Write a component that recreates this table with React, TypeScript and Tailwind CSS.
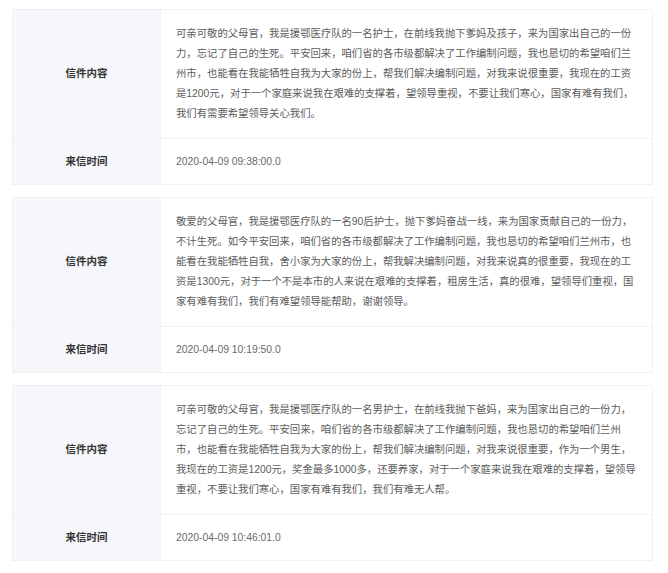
const letters = [
  {
    lines: [
      "可亲可敬的父母官，我是援鄂医疗队的一名护士，在前线我抛下爹妈及孩子，来为国家出自己的一份",
      "力，忘记了自己的生死。平安回来，咱们省的各市级都解决了工作编制问题，我也恳切的希望咱们兰",
      "州市，也能看在我能牺牲自我为大家的份上，帮我们解决编制问题，对我来说很重要，我现在的工资",
      "是1200元，对于一个家庭来说我在艰难的支撑着，望领导重视，不要让我们寒心，国家有难有我们，",
      "我们有需要希望领导关心我们。",
    ],
    time: "2020-04-09 09:38:00.0",
  },
  {
    lines: [
      "敬爱的父母官，我是援鄂医疗队的一名90后护士，抛下爹妈奋战一线，来为国家贡献自己的一份力，",
      "不计生死。如今平安回来，咱们省的各市级都解决了工作编制问题，我也恳切的希望咱们兰州市，也",
      "能看在我能牺牲自我，舍小家为大家的份上，帮我解决编制问题，对我来说真的很重要，我现在的工",
      "资是1300元，对于一个不是本市的人来说在艰难的支撑着，租房生活，真的很难，望领导们重视，国",
      "家有难有我们，我们有难望领导能帮助，谢谢领导。",
    ],
    time: "2020-04-09 10:19:50.0",
  },
  {
    lines: [
      "可亲可敬的父母官，我是援鄂医疗队的一名男护士，在前线我抛下爸妈，来为国家出自己的一份力，",
      "忘记了自己的生死。平安回来，咱们省的各市级都解决了工作编制问题，我也恳切的希望咱们兰州",
      "市，也能看在我能牺牲自我为大家的份上，帮我们解决编制问题，对我来说很重要，作为一个男生，",
      "我现在的工资是1200元，奖金最多1000多，还要养家，对于一个家庭来说我在艰难的支撑着，望领导",
      "重视，不要让我们寒心，国家有难有我们，我们有难无人帮。",
    ],
    time: "2020-04-09 10:46:01.0",
  },
];

function LetterCard({ lines, time }: { lines: string[]; time: string }) {
  return (
    <div className="w-[641px] border border-[#f0f1f3] bg-white">
      <div className="grid grid-cols-[148px_1fr] border-b border-[#f2f3f5]">
        <div className="flex items-center justify-center bg-[#f6f7fa] border-r border-[#f2f3f5] text-[10.5px] font-bold text-[#333]">
          信件内容
        </div>
        <div className="px-[15px] py-[14px] text-[10.35px] leading-5 text-[#5c5c5c]">
          {lines.map((l, i) => (
            <div key={i} className="whitespace-nowrap">
              {l}
            </div>
          ))}
        </div>
      </div>
      <div className="grid grid-cols-[148px_1fr] h-[45px]">
        <div className="flex items-center justify-center bg-[#f6f7fa] border-r border-[#f2f3f5] text-[10.5px] font-bold text-[#333]">
          来信时间
        </div>
        <div className="flex items-center px-[15px] text-[10.35px] text-[#6a6a6a]">{time}</div>
      </div>
    </div>
  );
}

export default function App() {
  return (
    <div
      className="min-h-screen bg-white pl-3 pt-[9px] flex flex-col gap-3"
      style={{ fontFamily: '"Liberation Sans", "Noto Sans CJK SC", sans-serif' }}
    >
      {letters.map((l, i) => (
        <LetterCard key={i} lines={l.lines} time={l.time} />
      ))}
    </div>
  );
}
